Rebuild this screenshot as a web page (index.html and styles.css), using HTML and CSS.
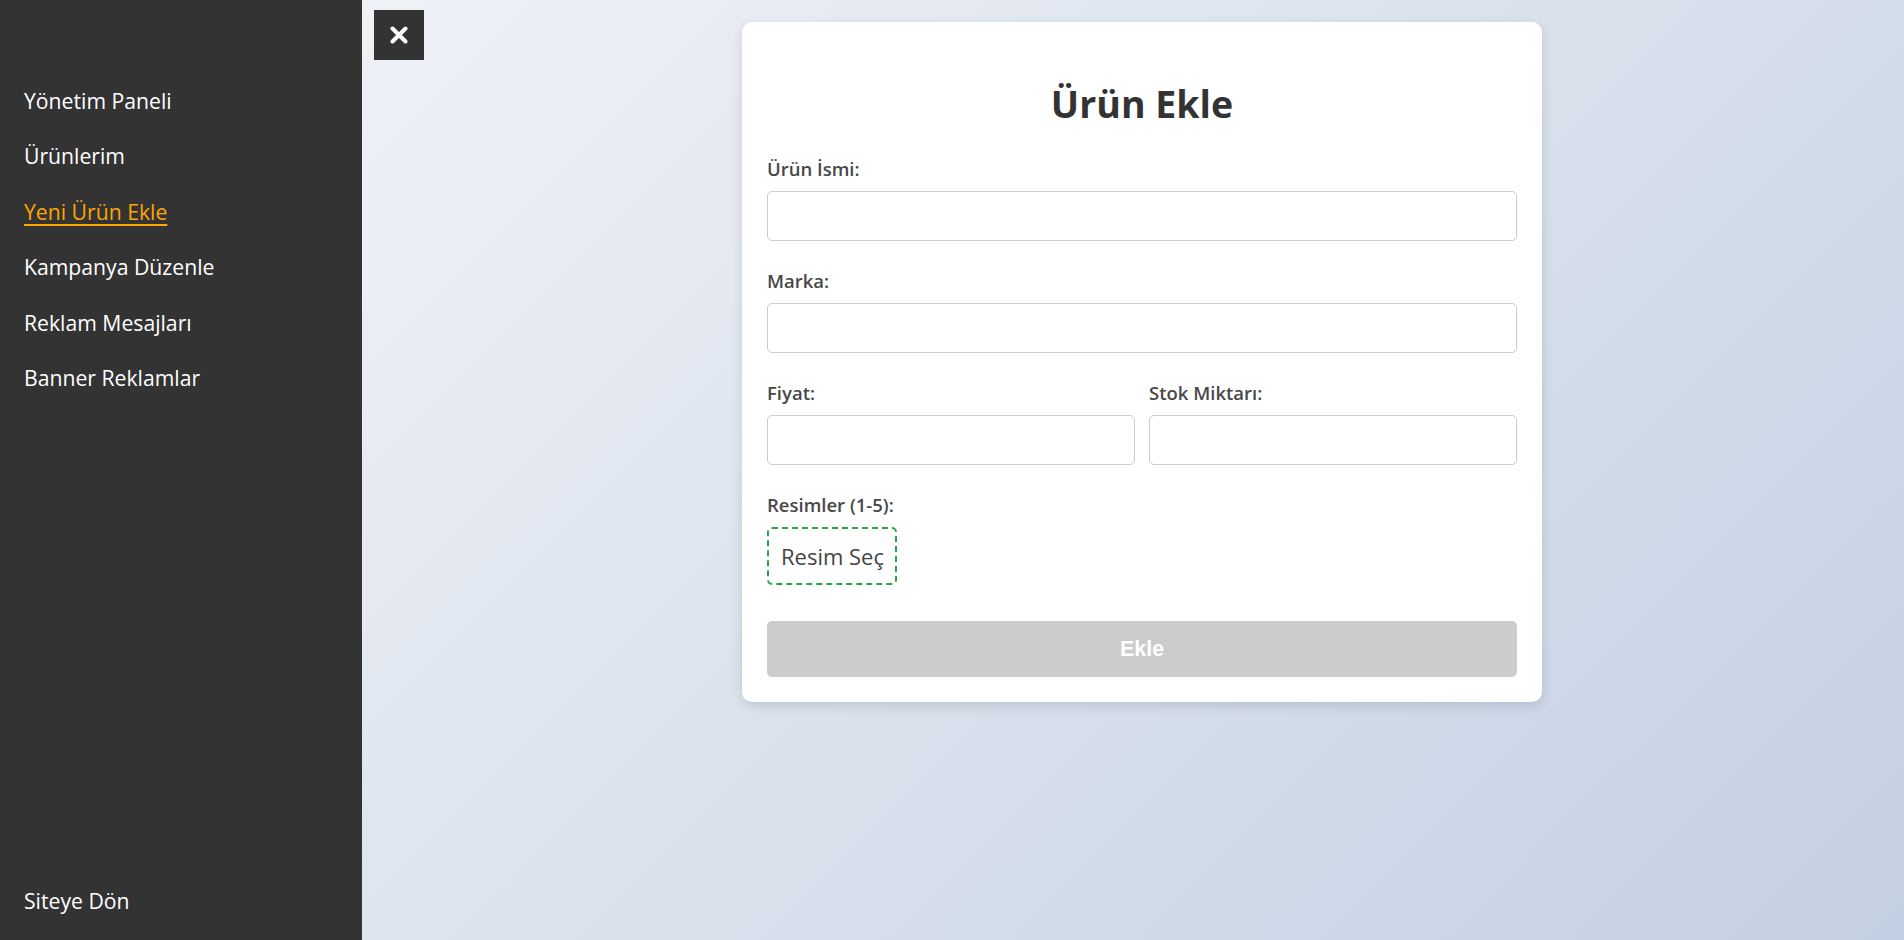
FILE: index.html
```html
<!DOCTYPE html>
<html lang="tr">
<head>
<meta charset="utf-8">
<title>Ürün Ekle</title>
<link rel="stylesheet" href="styles.css">
</head>
<body>
<div class="layout">
  <aside class="sidebar">
    <nav class="nav">
      <a class="nav-link" href="#">Yönetim Paneli</a>
      <a class="nav-link" href="#">Ürünlerim</a>
      <a class="nav-link active" href="#">Yeni Ürün Ekle</a>
      <a class="nav-link" href="#">Kampanya Düzenle</a>
      <a class="nav-link" href="#">Reklam Mesajları</a>
      <a class="nav-link" href="#">Banner Reklamlar</a>
    </nav>
    <a class="nav-link back" href="#">Siteye Dön</a>
  </aside>
  <main class="main">
    <button class="close-btn" type="button" aria-label="Kapat">
      <svg width="18" height="18" viewBox="0 0 18 18"><path d="M2.5 2.5 L15.5 15.5 M15.5 2.5 L2.5 15.5" stroke="#fff" stroke-width="4" stroke-linecap="round" fill="none"/></svg>
    </button>
    <div class="card">
      <h2 class="title">Ürün Ekle</h2>
      <div class="group">
        <label class="label">Ürün İsmi:</label>
        <input class="input" type="text">
      </div>
      <div class="group">
        <label class="label">Marka:</label>
        <input class="input" type="text">
      </div>
      <div class="row">
        <div class="group">
          <label class="label">Fiyat:</label>
          <input class="input" type="text">
        </div>
        <div class="group">
          <label class="label">Stok Miktarı:</label>
          <input class="input" type="text">
        </div>
      </div>
      <div class="group images">
        <label class="label">Resimler (1-5):</label>
        <div class="pick">Resim Seç</div>
      </div>
      <button class="submit" type="button">Ekle</button>
    </div>
  </main>
</div>
</body>
</html>
```
FILE: styles.css
```css
* { box-sizing: border-box; }
html, body { margin: 0; height: 100%; }
body {
  font-family: "Open Sans", "Noto Sans", sans-serif;
  background: linear-gradient(135deg, #f5f7fa 0%, #c3cfe2 100%);
  overflow: hidden;
}
.layout { display: flex; height: 940px; }
.sidebar {
  width: 362px;
  flex: 0 0 362px;
  background: #333;
  display: flex;
  flex-direction: column;
  padding: 86px 0 24px 24px;
}
.nav { display: flex; flex-direction: column; gap: 25.4px; }
.nav-link {
  color: #fff;
  text-decoration: none;
  font-size: 21.2px;
  line-height: 30px;
}
.nav-link.active {
  color: #ffa500;
  text-decoration: underline;
  text-decoration-thickness: 2px;
  text-underline-offset: 4px;
}
.back { margin-top: auto; }
.main {
  flex: 1;
  position: relative;
  padding: 22px 0 0 18px;
}
.close-btn {
  position: absolute;
  left: 12px;
  top: 10px;
  width: 50px;
  height: 50px;
  border: 0;
  background: #333;
  display: flex;
  align-items: center;
  justify-content: center;
  padding: 0;
}
.card {
  width: 800px;
  margin: 0 auto;
  background: #fff;
  border-radius: 10px;
  padding: 25px;
  box-shadow: 0 4px 12px rgba(0, 0, 0, 0.12);
}
.title {
  margin: 34px 0 31px;
  text-align: center;
  font-size: 37.5px;
  line-height: 46px;
  font-weight: 700;
  color: #333;
}
.group { margin-bottom: 29px; }
.label {
  display: block;
  font-size: 18.5px;
  line-height: 22px;
  font-weight: 600;
  color: #484848;
  margin-bottom: 11px;
}
.input {
  display: block;
  width: 100%;
  height: 50px;
  border: 1px solid #ccc;
  border-radius: 5px;
  font-size: 18px;
  padding: 0 12px;
  background: #fff;
}
.row { display: flex; gap: 14px; }
.row .group { flex: 1; }
.images { margin-bottom: 36px; }
.pick {
  display: inline-flex;
  align-items: center;
  height: 58px;
  padding: 0 11px 0 12px;
  border: 2px dashed #28a745;
  border-radius: 5px;
  font-size: 22px;
  color: #444;
}
.submit {
  display: block;
  width: 100%;
  height: 56px;
  border: 0;
  border-radius: 5px;
  background: #ccc;
  color: #fff;
  font-family: "Liberation Sans", Arial, sans-serif;
  font-weight: 700;
  font-size: 21.5px;
}
```
